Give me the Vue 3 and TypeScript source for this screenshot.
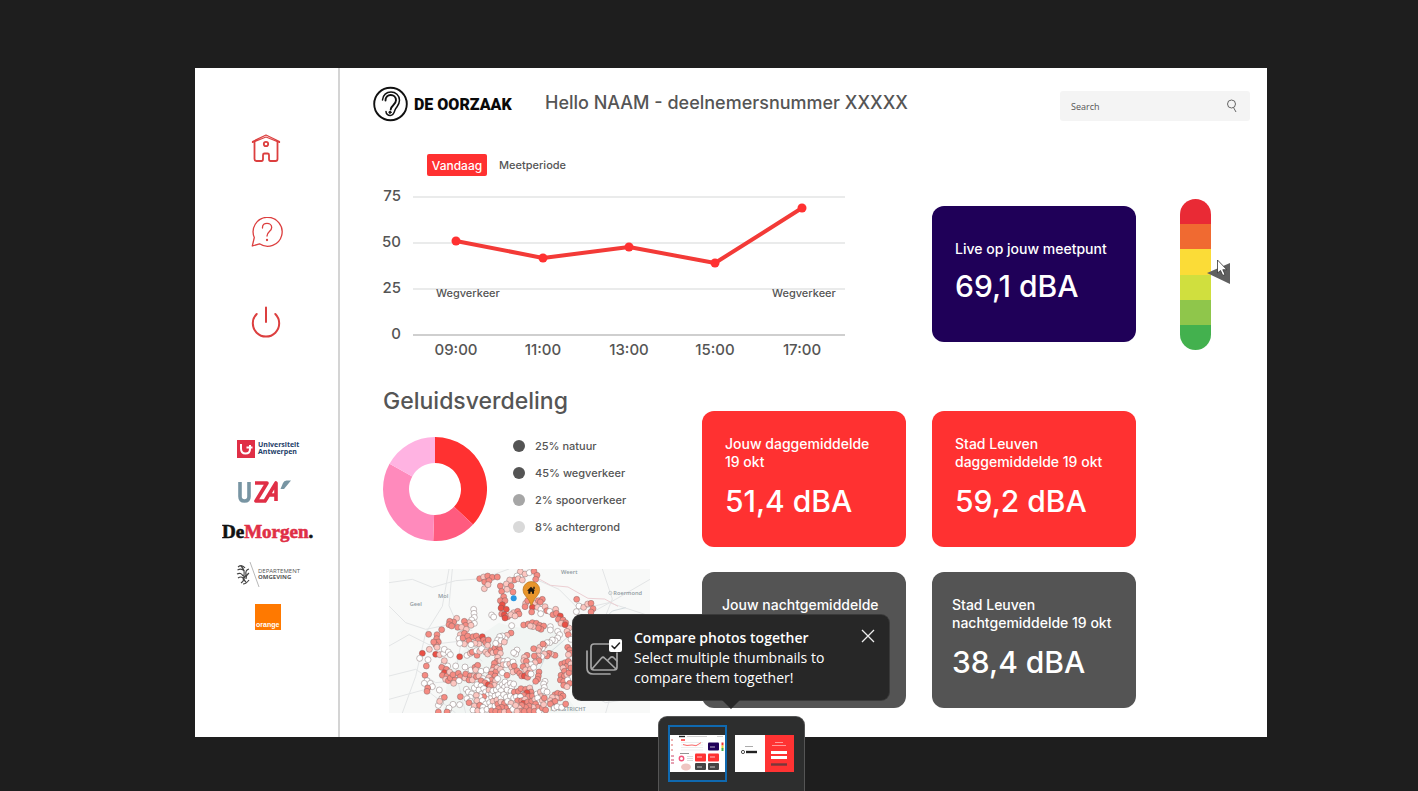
<script setup lang="ts">
interface Point { x: number; y: number; label: string }
interface Card { id: string; tone: string; lines: string[]; value?: string }

const points: Point[] = [
  { x: 83, y: 56, label: '09:00' },
  { x: 170, y: 73, label: '11:00' },
  { x: 256, y: 62, label: '13:00' },
  { x: 342, y: 78, label: '15:00' },
  { x: 429, y: 23, label: '17:00' },
]
const linePath = points.map(p => `${p.x},${p.y}`).join(' ')
const ticks = [
  { y: 12, label: '75' },
  { y: 58, label: '50' },
  { y: 104, label: '25' },
  { y: 150, label: '0' },
]

const polar = (radius: number, degrees: number) => {
  const a = (degrees - 90) * Math.PI / 180
  return `${52 + radius * Math.cos(a)} ${52 + radius * Math.sin(a)}`
}
const ringSlice = (from: number, to: number) =>
  `M${polar(52, from)}A52 52 0 0 1 ${polar(52, to)}L${polar(26, to)}A26 26 0 0 0 ${polar(26, from)}Z`
const slices = [
  { path: ringSlice(0, 133), color: '#ff3131' },
  { path: ringSlice(133, 182), color: '#ff5b7f' },
  { path: ringSlice(182, 299), color: '#ff8abc' },
  { path: ringSlice(299, 360), color: '#ffb3e2' },
]
const legend = [
  { tone: 'dark', text: '25% natuur' },
  { tone: 'dark', text: '45% wegverkeer' },
  { tone: 'mid', text: '2% spoorverkeer' },
  { tone: 'light', text: '8% achtergrond' },
]

const cards: Card[] = [
  { id: 'own-day', tone: 'red', lines: ['Jouw daggemiddelde', '19 okt'], value: '51,4 dBA' },
  { id: 'city-day', tone: 'red', lines: ['Stad Leuven', 'daggemiddelde 19 okt'], value: '59,2 dBA' },
  { id: 'own-night', tone: 'gray', lines: ['Jouw nachtgemiddelde'] },
  { id: 'city-night', tone: 'gray', lines: ['Stad Leuven', 'nachtgemiddelde 19 okt'], value: '38,4 dBA' },
]

const levels = ['red', 'orange', 'yellow', 'lime', 'green', 'deep']

// Measuring stations: x, y and colour level (0 = quiet, 3 = loud)
const stationData = `
272,38,2 284,33,1 296,30,2 310,34,2 325,33,2 287,48,2 300,44,2 286,68,1 297,56,1
394,17,1 408,24,1 421,20,0 435,16,2 444,28,2 440,40,2 384,30,0 376,42,2 362,42,1 388,38,1 400,42,1
352,54,1 366,60,2 334,60,2 338,76,2 354,70,1 372,78,2 344,92,2 334,104,2 348,104,2 340,116,3 336,126,3 352,130,3 338,144,2 346,146,3 356,152,2 348,156,3
308,147,0 314,153,0 374,140,1 366,146,1 386,136,2 390,144,2 378,150,1 410,112,1 416,104,2 408,122,2 438,112,1 448,104,2 460,100,2 454,108,2 430,124,3 428,138,2 446,124,1 456,130,0 468,122,1 474,134,2 455,143,0 482,136,0 492,146,2 500,130,1 502,142,2 514,150,3 508,160,2 522,162,2 530,170,2 516,172,1 540,186,1 534,196,1 528,176,3
254,130,0 255,142,0 256,154,0 248,162,0 256,172,0 240,170,1 226,166,2 230,178,2 246,178,1
203,157,1 194,168,2 182,166,2 180,176,2 188,180,2 206,184,2 218,184,1 232,190,1 158,191,2 144,206,2 119,205,2 143,218,2 148,228,2 140,236,2 144,244,1 134,228,2 121,250,1
100,262,3 92,277,0 117,281,0 112,300,2 140,265,3 152,266,1 164,262,0 166,250,0 178,258,0 184,266,0 108,328,2 114,344,0 106,352,0 124,352,0 130,362,0 116,366,2 114,376,2 151,372,0
214,206,1 226,202,2 210,218,0 222,216,2 236,210,2 240,224,2 252,212,2 262,210,2 268,222,2 280,212,3 284,222,2 270,234,1 258,232,1 246,236,0 226,234,1 212,232,0 290,230,2 298,222,2 296,238,1
212,272,3 234,268,0 244,262,1 250,258,2 264,268,2 262,254,0 272,256,1 278,248,0 290,258,1 296,264,1 306,254,2 312,260,1 318,246,2 328,240,2 332,250,2 322,258,2 334,262,1 330,234,1
368,179,0 366,201,2 354,208,1 348,218,0 340,210,0 332,212,0 326,222,0 320,232,0 336,224,0 346,228,1
404,177,2 418,174,2 430,170,2 442,172,2 452,178,2 464,180,2 456,190,2 448,186,2 432,182,1 424,180,1 484,182,0 484,192,0
506,196,0 512,206,0 506,216,0 498,224,0 490,222,0 482,230,0 474,230,0 466,238,1 460,246,0 452,244,1 462,234,2 448,254,1 434,248,2 538,206,2 546,220,0 536,244,2 542,252,2 546,262,2 538,266,1
384,252,0 380,264,0 374,260,0 498,268,2 486,264,1 480,262,2 474,270,2 466,264,1 458,272,0 448,270,1 442,278,1 436,270,2 450,284,2 438,290,1 414,268,2 406,274,1 404,284,1 412,286,2 426,296,0 412,300,1 402,302,2 410,312,1 424,310,1 434,304,0
164,296,0 176,300,0 158,304,2 172,310,2 166,320,3 160,328,2 174,330,2 182,318,1 166,284,1 170,340,1 178,344,2 184,336,2 198,342,2 194,352,1 192,326,2 208,322,2 214,332,2 228,336,1 210,344,0 230,324,2 244,330,2 240,342,2 256,330,1 250,342,1 262,332,2 200,300,0 228,303,0 246,312,0 258,304,2 266,298,2 260,312,1 276,316,0 292,312,0 270,330,1 282,338,0 276,344,2
326,274,1 324,286,2 316,292,2 334,284,1 344,286,0 342,296,1 356,284,0 352,296,0 362,294,1 372,288,0 368,304,1 376,300,2 314,304,2 324,306,1 310,314,1 320,318,2 306,324,2 318,330,2 334,310,1 340,320,0 354,328,2 372,318,1 384,314,2 392,322,2 398,330,2 406,330,3 416,334,2 418,322,2 426,324,0 300,334,1 308,342,2 294,344,0 288,350,2 298,356,3 310,354,2 320,344,1 316,358,1 304,362,2 326,338,0 450,318,2 448,330,2 446,340,2 440,346,2 468,346,0 464,354,0 466,364,0
518,294,2 528,290,2 534,300,2 522,306,1 526,316,2 538,286,2 546,294,1 516,328,2 526,330,2 534,326,1 540,320,2 514,342,2 524,346,2 536,342,0 542,352,2 524,358,2 534,362,1 546,306,2
158,398,0 154,410,0 148,418,0 166,394,2 152,406,1 214,392,2 212,416,0 192,415,0 148,438,2 178,432,0 180,426,0 174,438,2
232,370,0 238,378,0 248,384,0 244,394,0 234,398,0 244,406,0 256,366,0 264,356,0 276,360,0 270,372,0 284,368,0 278,384,0 290,378,0 300,372,1 296,388,0 308,384,0 304,398,0 312,374,0 322,372,0 330,364,0 318,390,0 340,356,0 348,348,0 346,364,0 356,358,0 364,352,0 368,364,0 374,354,0 354,372,0 366,376,0 336,374,0 328,386,0 292,400,0 284,392,2 272,392,0 262,388,1 264,404,1 280,404,0 290,414,0 302,410,0 312,406,1 324,402,1 336,396,0 344,386,0 352,394,0 364,390,0 376,378,2 374,396,0 382,392,0 240,410,2 256,420,1 252,432,0 266,434,1 272,418,2 282,424,0 280,434,0 294,430,0 306,422,0 308,434,2 318,420,0 326,414,2 336,408,1 346,412,2 356,406,0 366,412,1 362,424,0 350,426,2 338,424,2 328,428,2 320,436,2 334,438,2 346,438,1 360,436,2 372,430,0
388,376,2 396,368,2 410,370,2 422,366,1 426,378,2 414,380,3 404,388,2 418,392,2 430,390,2 394,392,0 386,404,2 398,404,2 408,400,1 404,412,3 416,408,2 428,406,2 438,400,1 444,384,0 454,378,1 464,374,0 474,378,0 456,392,1 446,396,0 450,410,0 460,404,1 466,396,2 440,414,2 446,424,2 432,424,1 420,420,2 410,424,2 398,418,2 390,426,1 394,436,2 406,436,2 422,434,2 436,436,2 450,436,0 460,426,2 464,416,1 470,432,2 380,418,1 384,436,1
498,386,2 506,382,2 516,384,2 522,390,2 514,396,2 502,396,1 490,394,1 484,404,1 492,410,2 498,406,2 484,414,2 496,426,0 504,422,0 518,424,0 530,414,2
563,100,2 562,137,0 570,120,0 584,124,1 596,114,1 606,112,2 612,128,2 606,138,2`
const tones = ['#ffffff', '#fcc6c0', '#f58b82', '#ea5045']
const stations = stationData.trim().split(/\s+/).map(s => {
  const [x, y, t] = s.split(',').map(Number)
  return { x, y, fill: tones[t] }
})
</script>

<template>
  <div class="viewer">
    <div class="slide">
      <aside class="sidebar">
        <nav class="nav" aria-label="Hoofdmenu">
          <button type="button" aria-label="Home">
            <svg viewBox="0 0 32 32" width="32" height="32" fill="none" stroke="#dc3f3f" stroke-width="1.8" stroke-linecap="round" stroke-linejoin="round">
              <path d="M1.500 9.500 15 3 28.500 9.500v1L15 5 1.500 10.500z" stroke-width="1.200" />
              <path d="M3.500 10v17q0 2 2 2h5q1.500 0 1.500-2v-4q0-1.500 1.500-1.500h3q1.500 0 1.500 1.500v4q0 2 1.500 2h5q2 0 2-2V10" />
              <circle cx="15" cy="12" r="2.200" />
            </svg>
          </button>
          <button type="button" aria-label="Vragen">
            <svg viewBox="0 0 32 32" width="32" height="32" fill="none" stroke="#dc3f3f" stroke-width="1.300" stroke-linecap="round" stroke-linejoin="round">
              <path d="M3.300 20.500A14.500 14.500 0 1 1 8.500 26.800L1.300 29Z" />
              <path d="M11.500 11v-.7c0-2.700 2-4 4.500-4s4.700 1.600 4.700 4.100c0 4.300-4.700 4-4.700 8.600" />
              <circle cx="16" cy="23" r=".5" fill="#dc3f3f" />
            </svg>
          </button>
          <button type="button" class="power" aria-label="Afmelden">
            <svg viewBox="0 0 32 32" width="32" height="32" fill="none" stroke="#dc3f3f" stroke-width="2" stroke-linecap="round">
              <path d="M15 1.500v14.500M5.700 8a13.200 13.200 0 1 0 18.600 0" />
            </svg>
          </button>
        </nav>
        <div class="partners">
          <svg viewBox="0 0 64 20" width="64" height="20" role="img" aria-label="Universiteit Antwerpen">
            <rect x="1" y="1" width="18" height="18" fill="#e02f46" />
            <path d="M5 5v4.500q0 5 4.500 5t4.500-4.500V6M10.500 8.500h6" fill="none" stroke="#fff" stroke-width="2" />
            <text x="22" y="8" class="ua">Universiteit</text>
            <text x="22" y="15" class="ua">Antwerpen</text>
          </svg>
          <svg viewBox="0 0 62 26" width="62" height="26" role="img" aria-label="UZA" fill="none" stroke-width="3.600" stroke-linejoin="round">
            <path d="M3 4v14.500q0 4.500 4.500 4.500t4.500-4.500V4" stroke="#7895a3" />
            <path d="M18 5h12L19 23h9l11-18v18M31 17h8" stroke="#e02f46" />
            <path d="m43.500 11 2.500-6q1-2.500 3.500-2.500h4.500l-7 8.500z" fill="#7895a3" />
          </svg>
          <svg viewBox="0 0 92 26" width="92" height="26" role="img" aria-label="DeMorgen.">
            <text x="0" y="18" class="morgen">De<tspan class="crimson">Morgen</tspan>.</text>
          </svg>
          <svg viewBox="0 0 66 26" width="66" height="26" role="img" aria-label="Departement Omgeving">
            <path d="M3 5q4-3 7 1M2.500 8q4-2 7 1M2 12q4-2 6 2M6 4q4 4 3 9t2 7M3 16q3-2 5 0t-2 5M14 7q-4 1-3 6l-3 5M14 11q-3 2-3 6M8 22q3 0 6-4" fill="none" stroke="#444" stroke-width="1.200" />
            <path d="m15 0 9 25" stroke="#999" stroke-width=".7" />
            <text x="23" y="11" class="dept">DEPARTEMENT</text>
            <text x="23" y="17" class="dept strong">OMGEVING</text>
          </svg>
          <svg viewBox="0 0 26 26" width="26" height="26" role="img" aria-label="orange">
            <rect width="26" height="26" fill="#ff7900" />
            <text x="1" y="23" class="orange">orange</text>
          </svg>
        </div>
      </aside>

      <div class="page">
        <header class="header">
          <div class="brand">
            <svg viewBox="0 0 36 36" width="36" height="36" fill="none" stroke="#111" stroke-linecap="round">
              <circle cx="17.500" cy="18" r="16.300" stroke-width="1.900" />
              <path d="M9.500 14c.3-5 4-8 8.500-8s8.500 3.300 8.500 8.300c0 5-3.300 6.500-4.500 9.700-.9 2.500-1.300 5.500-4.700 5.500-2.400 0-4.300-1.600-4.300-4" stroke-width="1.500" />
              <path d="M12.500 14.500c0-3.500 2.300-5.500 5.200-5.500s5.300 2.200 5.300 5.300c0 4.700-5.300 5-5.300 9.200" stroke-width="1.900" />
              <circle cx="17" cy="26.300" r="1.100" fill="#111" />
            </svg>
            <span>DE OORZAAK</span>
          </div>
          <h1>Hello NAAM - deelnemersnummer XXXXX</h1>
          <div class="search">
            <input type="search" placeholder="Search" aria-label="Search" />
            <svg viewBox="0 0 12 14" width="12" height="14" fill="none" stroke="#666" stroke-width="1"><circle cx="5.500" cy="5" r="4" /><path d="m7.500 8.500 2.500 4.500" /></svg>
          </div>
        </header>

        <main class="grid">
          <section class="chart">
            <div class="tabs">
              <button type="button" class="tab active">Vandaag</button>
              <button type="button" class="tab">Meetperiode</button>
            </div>
            <svg class="plot" viewBox="0 0 472 180" role="img" aria-label="Geluidsniveau vandaag">
              <g v-for="t in ticks" :key="t.label">
                <line x1="40" x2="472" :y1="t.y" :y2="t.y" :class="{ base: t.label === '0' }" class="rule" />
                <text x="28" :y="t.y + 4" text-anchor="end" class="axis">{{ t.label }}</text>
              </g>
              <polyline :points="linePath" fill="none" stroke="#f33a37" stroke-width="4" stroke-linejoin="round" />
              <g v-for="p in points" :key="p.label">
                <circle :cx="p.x" :cy="p.y" r="4.500" fill="#ff3131" />
                <text :x="p.x" y="170" text-anchor="middle" class="axis">{{ p.label }}</text>
              </g>
              <text x="63" y="112" class="note">Wegverkeer</text>
              <text x="399" y="112" class="note">Wegverkeer</text>
            </svg>
          </section>

          <article class="card navy">
            <h3>Live op jouw meetpunt</h3>
            <p>69,1 dBA</p>
          </article>

          <div class="gauge">
            <div class="scale"><i v-for="l in levels" :key="l" :class="l"></i></div>
            <svg class="pointer" viewBox="0 0 24 26" width="24" height="26">
              <path d="M0 14 23 4v21z" fill="#606060" />
              <path d="M10.500 1v13l3-2.500 2.300 5 2.200-1-2.200-4.800h4z" fill="#fff" stroke="#333" stroke-width=".8" />
            </svg>
          </div>

          <section class="sound">
            <h2>Geluidsverdeling</h2>
            <div class="split">
              <svg viewBox="0 0 104 104" width="104" height="104" role="img" aria-label="Geluidsverdeling">
                <path v-for="s in slices" :key="s.color" :d="s.path" :fill="s.color" />
              </svg>
              <ul class="legend">
                <li v-for="l in legend" :key="l.text"><i :class="l.tone"></i>{{ l.text }}</li>
              </ul>
            </div>
            <svg class="map" viewBox="0 9 783 432" role="img" aria-label="Kaart met meetpunten">
              <rect y="9" width="783" height="432" fill="#f8f9f8" />
              <path d="M330 170q90 30 160 10l40 60-20 120 60 81H160l20-130 60-80z" fill="#f1f5f3" />
              <g fill="none" stroke="#e3e5e6" stroke-width="3">
                <path d="M0 50 70 40l60 24 70-20 80-6 80-29M0 120l50 50 60 20 80-16 60 20M0 240l60-34 60 30 90-10 70 60M0 330l80-20 60 40 120-10M40 441l40-110 30-130 50-80 20-112M190 9l-10 110 40 90-20 110 30 122M0 400l110-30 90 71M440 40l70 30 60 60 90-20 123 40M640 9l30 90-40 100 60 90 93 20M590 380l60 30 130-20M690 300l-40 141M590 150l90-50 103-60" />
                <path d="m445 36 40 22 52 5 60 34 50 2 40 22" stroke="#eccfd3" />
                <path d="m640 165 30-30 40-10M540 210l-70 60-40 90 20 81" stroke="#d5dde0" />
              </g>
              <g class="towns">
                <text x="62" y="119">Geel</text>
                <text x="147" y="95">Mol</text>
                <text x="516" y="25">Weert</text>
                <text x="673" y="87">Roermond</text>
                <text x="484" y="436">MAASTRICHT</text>
              </g>
              <circle cx="664" cy="81" r="5" fill="none" stroke="#adb6ba" stroke-width="2" />
              <g stroke="#6f5c5c" stroke-width="1.200">
                <circle v-for="(s, i) in stations" :key="i" :cx="s.x" :cy="s.y" r="9" :fill="s.fill" />
              </g>
              <circle cx="374" cy="97" r="9" fill="#2a97e0" />
              <path d="M427 119q-6-18-18-30a25 25 0 1 1 36 0q-12 12-18 30z" fill="#e8952b" stroke="#b7741d" stroke-width="2" />
              <path d="m414 74 12-12 12 12h-3v9h-6v-6h-5v6h-6v-9zM433 62h4v8h-4z" fill="#1c1710" />
            </svg>
          </section>

          <div class="averages">
            <article v-for="c in cards" :key="c.id" class="card" :class="c.tone">
              <h3><span v-for="l in c.lines" :key="l">{{ l }}</span></h3>
              <p v-if="c.value">{{ c.value }}</p>
            </article>
          </div>
        </main>
      </div>
    </div>

    <div class="overlay">
      <div class="tip" role="dialog" aria-label="Compare photos together">
        <svg viewBox="0 0 38 38" width="38" height="38" fill="none" stroke="#a5a5a5" stroke-width="1.700" stroke-linecap="round" stroke-linejoin="round">
          <path d="M24 6H9q-3 0-3 3v20q0 3 3 3h20q3 0 3-3V15" />
          <path d="M2 13v17q0 6 6 6h17" />
          <path d="m7 31 9.500-11q1.500-1.500 3 0L31 31M23 22l2.500-2.500q1.500-1.300 3 0L32 23" />
          <rect x="24" y="1" width="13" height="13" rx="2" fill="#fff" stroke="none" />
          <path d="m27 8 2.500 2.500 5-5.500" stroke="#222" stroke-width="1.500" />
        </svg>
        <div class="tiptext">
          <strong>Compare photos together</strong>
          <span>Select multiple thumbnails to</span>
          <span>compare them together!</span>
        </div>
        <button type="button" class="close" aria-label="Close">
          <svg viewBox="0 0 14 14" width="14" height="14" stroke="#eee" stroke-width="1.300"><path d="m1 1 12 12M13 1 1 13" /></svg>
        </button>
      </div>
      <div class="strip">
        <button type="button" class="thumb selected" aria-label="Photo 1">
          <svg viewBox="0 0 55 37" width="55" height="37">
            <rect width="55" height="37" fill="#fff" />
            <path d="M9 1.500h6" stroke="#222" stroke-width="1.400" />
            <path d="M17 1.500h20M47 1.500h6" stroke="#bbb" stroke-width=".7" />
            <path d="M11 5h4" stroke="#ff3131" stroke-width="1.500" />
            <path d="M11 7.500h22M11 10h22M11 12.500h22M11 15h22" stroke="#ddd" stroke-width=".5" />
            <path d="m13 9.500 4 1 5-.5 4 .7 5-3" fill="none" stroke="#ff3131" stroke-width=".7" />
            <rect x="38" y="7.500" width="11" height="8" rx="1" fill="#1f0058" />
            <rect x="25" y="18.500" width="11" height="8" rx="1" fill="#f33" /><rect x="38" y="18.500" width="11" height="8" rx="1" fill="#f33" />
            <rect x="25" y="28" width="11" height="7" rx="1" fill="#444" /><rect x="38" y="28" width="11" height="7" rx="1" fill="#444" />
            <path d="M27 22h5M40 22h5M27 32h5M40 32h5M40 12h5" stroke="#fff" stroke-width=".7" />
            <path d="M10 18.500h9" stroke="#777" stroke-width=".8" />
            <circle cx="11.500" cy="23.500" r="2.200" fill="none" stroke="#f3547a" stroke-width="1.400" />
            <path d="M17 21.500h6M17 23.500h6M17 25.500h6" stroke="#bbb" stroke-width=".5" />
            <ellipse cx="16" cy="32" rx="5" ry="3.500" fill="#efc5c2" />
            <path d="M52.500 7.500v3" stroke="#e33" stroke-width="2" /><path d="M52.500 10.500v3" stroke="#e8d435" stroke-width="2" /><path d="M52.500 13v3" stroke="#43b14e" stroke-width="2" />
            <path d="M2 4v2M2 9v2M2 14v2" stroke="#d66" stroke-width="1" /><path d="M1 21h3M1 25h3M1 28h3" stroke="#c46" stroke-width="1" />
          </svg>
        </button>
        <button type="button" class="thumb" aria-label="Photo 2">
          <svg viewBox="0 0 59 37" width="59" height="37">
            <rect width="59" height="37" fill="#fff" /><rect x="30" width="29" height="37" fill="#f33" />
            <path d="M10 11.500h8" stroke="#888" stroke-width=".7" />
            <circle cx="8" cy="17" r="1.600" fill="none" stroke="#222" stroke-width=".8" /><path d="M11 17h11" stroke="#222" stroke-width="2.400" />
            <path d="M40 7.500h8M37 10.500h14" stroke="#ffb5b5" stroke-width=".8" />
            <path d="M36 17.500h16M36 22.500h16" stroke="#fff" stroke-width="3" /><path d="M36 29.500h16" stroke="#77383c" stroke-width="2.400" />
          </svg>
        </button>
      </div>
    </div>
  </div>
</template>

<style>
body { margin: 0; background: #1e1e1e; }
</style>

<style scoped>
* { box-sizing: border-box; }
h1, h2, h3, p, ul { margin: 0; padding: 0; font-weight: 500; }
button { border: 0; padding: 0; background: none; font: inherit; color: inherit; cursor: pointer; }
svg { display: block; }
.viewer { position: relative; min-height: 100vh; padding: 68px 151px 54px 195px; background: #1e1e1e; font-family: Inter, "Open Sans", sans-serif; color: #555; }
.slide { display: flex; min-height: 669px; background: #fff; }
.sidebar { flex: 0 0 145px; border-right: 2px solid #d4d4d4; padding-top: 64px; display: flex; flex-direction: column; align-items: center; gap: 98px; }
.nav { display: flex; flex-direction: column; gap: 53px; }
.power { margin-top: 4px; }
.partners { display: flex; flex-direction: column; align-items: center; gap: 16px; padding-left: 2px; }
.partners svg:first-child { margin: 3px 0; }
.ua { font: 700 7px "Open Sans", sans-serif; fill: #1d4069; }
.morgen { font: 700 19px "Liberation Serif", serif; fill: #111; stroke: #111; stroke-width: .6px; }
.crimson { fill: #e02f46; stroke: #e02f46; }
.dept { font: 400 6px "Open Sans", sans-serif; fill: #555; }
.strong { font-weight: 700; }
.orange { font: 700 7px "Liberation Sans", sans-serif; fill: #fff; }

.page { flex: 1; min-width: 0; padding-left: 33px; }
.header { display: flex; align-items: center; height: 76px; padding-right: 17px; }
.brand { display: flex; align-items: center; gap: 5px; flex: 0 0 172px; margin-bottom: 4px; color: #0a0a0a; font: 900 16px Roboto, sans-serif; white-space: nowrap; }
.header h1 { font-size: 18px; line-height: 24px; margin-bottom: 6px; white-space: nowrap; }
.search { margin-left: auto; display: flex; align-items: center; width: 190px; height: 30px; padding: 0 12px 0 11px; border-radius: 3px; background: #f4f4f4; }
.search input { flex: 1; min-width: 0; border: 0; padding: 0; outline: 0; background: none; font: 9px "Open Sans", sans-serif; color: #555; appearance: none; }
.search input::placeholder { color: #555; opacity: 1; }

.grid { display: grid; grid-template-columns: minmax(0, 1fr) 204px 204px 105px; column-gap: 26px; }
.chart { grid-column: 1 / 3; padding: 10px 61px 0 0; }
.tabs { display: flex; gap: 12px; padding-left: 54px; height: 31px; font-size: 11px; font-weight: 500; }
.tab { height: 22px; }
.tab.active { width: 60px; border-radius: 2px; background: #ff3131; color: #fff; font-size: 12px; }
.plot { width: 100%; height: auto; }
.rule { stroke: #e3e5e5; stroke-width: 1.500; }
.rule.base { stroke: #cfcfcf; stroke-width: 2; }
.axis { font-size: 15px; font-weight: 500; fill: #555; }
.note { font-size: 11px; font-weight: 500; fill: #555; }

.card { height: 136px; padding: 24px 0 0 23px; border-radius: 12px; color: #fff; }
.card h3 { font-size: 14px; line-height: 18px; white-space: nowrap; }
.card h3 span { display: block; }
.card p { margin-top: 12px; font-size: 30px; line-height: 36px; white-space: nowrap; }
.card.navy { margin-top: 62px; padding-top: 34px; background: #1f0058; }
.card.navy p { margin-top: 10px; }
.card.red { background: #ff3131; }
.card.gray { padding-left: 20px; background: #545454; }

.gauge { position: relative; margin: 55px 0 0 18px; width: 31px; height: 151px; }
.scale { display: flex; flex-direction: column; height: 151px; border-radius: 16px; overflow: hidden; }
.scale i { flex: 1; }
.scale .red { background: #e92a35; }
.scale .orange { background: #f06a31; }
.scale .yellow { background: #fbdc37; }
.scale .lime { background: #d0df3e; }
.scale .green { background: #8fc64b; }
.scale .deep { background: #43b14e; }
.pointer { position: absolute; left: 27px; top: 60px; }

.sound { padding: 20px 0 24px 10px; }
.sound h2 { font-size: 23px; line-height: 32px; }
.split { display: flex; align-items: flex-start; gap: 26px; margin-top: 20px; }
.legend { list-style: none; display: flex; flex-direction: column; gap: 9px; font-size: 11px; line-height: 18px; }
.legend li { display: flex; align-items: center; gap: 10px; font-weight: 500; white-space: nowrap; }
.legend i { width: 12px; height: 12px; border-radius: 50%; }
.legend .dark { background: #545454; }
.legend .mid { background: #a6a6a6; }
.legend .light { background: #d9d9d9; }
.map { width: 261px; height: 144px; margin: 28px 0 0 6px; }
.towns { font: 600 17px "Open Sans", sans-serif; fill: #8f9aa1; }
.averages { grid-column: 2 / 4; display: grid; grid-template-columns: 1fr 1fr; gap: 25px 26px; align-content: start; padding-top: 46px; }

.overlay { position: absolute; left: 195px; right: 151px; bottom: 0; display: flex; flex-direction: column; align-items: center; gap: 17px; }
.tip { position: relative; display: flex; align-items: flex-start; width: 316px; height: 85px; padding: 13px 14px 0 12px; border-radius: 8px; background: #272727; color: #fff; box-shadow: 0 0 0 1px #3a3a3a; font-family: "Open Sans", sans-serif; }
.tip::after { content: ""; position: absolute; left: 149px; top: 85px; border: 9px solid transparent; border-top-color: #272727; border-bottom: 0; }
.tip > svg { margin-top: 10px; }
.tiptext { display: flex; flex-direction: column; margin-left: 11px; font-size: 14px; line-height: 20px; white-space: nowrap; }
.tiptext strong { font-weight: 600; }
.close { margin-left: auto; padding-top: 1px; }
.strip { display: flex; gap: 8px; width: 145px; height: 74px; padding: 8px 9px; border-radius: 8px 8px 0 0; background: #2d2e2e; box-shadow: 0 0 0 1px #555; }
.thumb { display: flex; align-items: center; justify-content: center; width: 59px; height: 57px; }
.thumb.selected { border: 2px solid #0f69b0; }
</style>
